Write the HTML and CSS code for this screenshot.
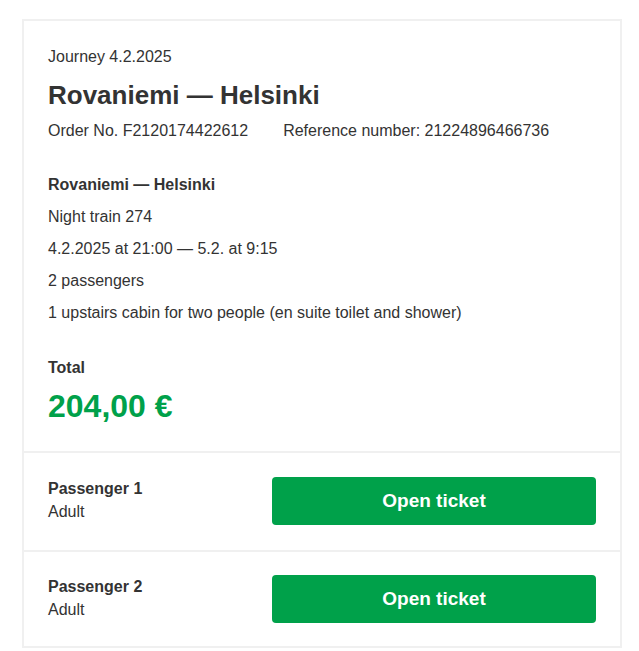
FILE: index.html
```html
<!DOCTYPE html>
<html>
  <head>
    <meta charset="utf-8" />
    <meta name="viewport" content="width=device-width, initial-scale=1" />
    <title>Journey 4.2.2025</title>
    <link rel="stylesheet" href="styles.css">
  </head>
  <body>
    <div class="card">
      <div class="summary">
        <div class="journey-date">Journey 4.2.2025</div>
        <h1 class="route">Rovaniemi — Helsinki</h1>
        <div class="order-info">
          <span>Order No. F2120174422612</span>
          <span>Reference number: 21224896466736</span>
        </div>

        <div class="details">
          <div class="details-title">Rovaniemi — Helsinki</div>
          <div>Night train 274</div>
          <div>4.2.2025 at 21:00 — 5.2. at 9:15</div>
          <div>2 passengers</div>
          <div>1 upstairs cabin for two people (en suite toilet and shower)</div>
        </div>

        <div class="total-label">Total</div>
        <div class="total-price">204,00 €</div>
      </div>

      <div class="passenger">
        <div class="passenger-info">
          <div class="passenger-name">Passenger 1</div>
          <div>Adult</div>
        </div>
        <button type="button" class="btn-ticket">Open ticket</button>
      </div>
      <div class="passenger">
        <div class="passenger-info">
          <div class="passenger-name">Passenger 2</div>
          <div>Adult</div>
        </div>
        <button type="button" class="btn-ticket">Open ticket</button>
      </div>
    </div>
  </body>
</html>
```

FILE: styles.css
```css
body {
  margin: 0;
  padding: 19px 17px 0 22px;
  font-family: "Liberation Sans", Arial, sans-serif;
  font-size: 16px;
  color: #333;
  background: #fff;
}
.card {
  width: 596px;
  border: 2px solid #f0f0f0;
}
.summary {
  padding: 24px 24px 27px;
}
.journey-date {
  line-height: 24px;
}
.route {
  margin: 10px 0 8px;
  font-size: 26px;
  line-height: 32px;
  font-weight: bold;
}
.order-info {
  display: flex;
  gap: 35px;
  line-height: 24px;
}
.details {
  margin-top: 26px;
  line-height: 32px;
}
.details-title {
  font-weight: bold;
}
.total-label {
  margin-top: 27px;
  line-height: 24px;
  font-weight: bold;
}
.total-price {
  margin-top: 8px;
  font-size: 32px;
  line-height: 36px;
  font-weight: bold;
  color: #00a14a;
}
.passenger {
  display: flex;
  justify-content: space-between;
  align-items: flex-start;
  padding: 24px 24px 25px;
  border-top: 2px solid #f0f0f0;
}
.passenger:last-child {
  padding-top: 23px;
  padding-bottom: 23px;
}
.passenger-info {
  padding-top: 1px;
  line-height: 22.5px;
}
.passenger-name {
  font-weight: bold;
}
.btn-ticket {
  width: 324px;
  height: 48px;
  border: 0;
  border-radius: 4px;
  background-color: #00a14a;
  color: #fff;
  font-family: "Liberation Sans", Arial, sans-serif;
  font-size: 19px;
  font-weight: bold;
  cursor: pointer;
}
```
